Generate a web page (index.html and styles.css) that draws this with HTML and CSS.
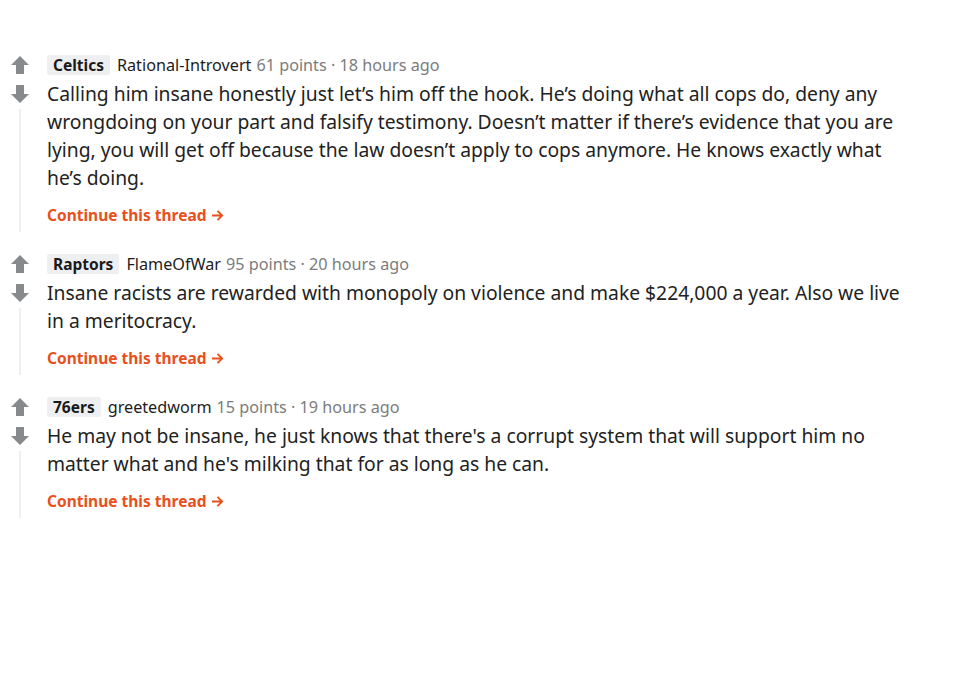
FILE: index.html
```html
<!DOCTYPE html>
<html>
<head>
<meta charset="utf-8">
<link rel="stylesheet" href="styles.css">
</head>
<body>
<div class="thread">
  <div class="comment">
    <div class="rail">
      <svg class="vote" viewBox="0 0 20 20"><path d="M10 1 L19 10 L14 10 L14 19 L6 19 L6 10 L1 10 Z"/></svg>
      <svg class="vote down" viewBox="0 0 20 20"><path d="M10 19 L19 10 L14 10 L14 1 L6 1 L6 10 L1 10 Z"/></svg>
      <div class="line"></div>
    </div>
    <div class="content">
      <div class="meta"><span class="flair">Celtics</span><span class="author">Rational-Introvert</span><span class="info">61 points · 18 hours ago</span></div>
      <p class="body">Calling him insane honestly just let’s him off the hook. He’s doing what all cops do, deny any wrongdoing on your part and falsify testimony. Doesn’t matter if there’s evidence that you are lying, you will get off because the law doesn’t apply to cops anymore. He knows exactly what he’s doing.</p>
      <a class="more" href="#">Continue this thread<svg class="arrow" viewBox="0 0 14 14"><path d="M1 7 H12 M7 2 L12 7 L7 12"/></svg></a>
    </div>
  </div>
  <div class="comment">
    <div class="rail">
      <svg class="vote" viewBox="0 0 20 20"><path d="M10 1 L19 10 L14 10 L14 19 L6 19 L6 10 L1 10 Z"/></svg>
      <svg class="vote down" viewBox="0 0 20 20"><path d="M10 19 L19 10 L14 10 L14 1 L6 1 L6 10 L1 10 Z"/></svg>
      <div class="line"></div>
    </div>
    <div class="content">
      <div class="meta"><span class="flair">Raptors</span><span class="author">FlameOfWar</span><span class="info">95 points · 20 hours ago</span></div>
      <p class="body">Insane racists are rewarded with monopoly on violence and make $224,000 a year. Also we live in a meritocracy.</p>
      <a class="more" href="#">Continue this thread<svg class="arrow" viewBox="0 0 14 14"><path d="M1 7 H12 M7 2 L12 7 L7 12"/></svg></a>
    </div>
  </div>
  <div class="comment">
    <div class="rail">
      <svg class="vote" viewBox="0 0 20 20"><path d="M10 1 L19 10 L14 10 L14 19 L6 19 L6 10 L1 10 Z"/></svg>
      <svg class="vote down" viewBox="0 0 20 20"><path d="M10 19 L19 10 L14 10 L14 1 L6 1 L6 10 L1 10 Z"/></svg>
      <div class="line"></div>
    </div>
    <div class="content">
      <div class="meta"><span class="flair">76ers</span><span class="author">greetedworm</span><span class="info">15 points · 19 hours ago</span></div>
      <p class="body">He may not be insane, he just knows that there's a corrupt system that will support him no matter what and he's milking that for as long as he can.</p>
      <a class="more" href="#">Continue this thread<svg class="arrow" viewBox="0 0 14 14"><path d="M1 7 H12 M7 2 L12 7 L7 12"/></svg></a>
    </div>
  </div>
</div>
</body>
</html>
```

FILE: styles.css
```css
html, body {
  margin: 0;
  padding: 0;
  background: #ffffff;
}
body {
  font-family: "Noto Sans", "Open Sans", sans-serif;
  color: #1c1c1c;
}
.thread {
  padding: 55px 0 0 4px;
  display: flex;
  flex-direction: column;
  gap: 22px;
}
.comment {
  display: flex;
  gap: 11px;
}
.rail {
  width: 32px;
  display: flex;
  flex-direction: column;
  align-items: center;
}
.vote {
  width: 20px;
  height: 20px;
  fill: #878a8c;
  display: block;
}
.vote.down {
  margin-top: 9px;
}
.line {
  flex: 1;
  width: 2px;
  background: #edeff1;
  margin-top: 5px;
  margin-left: -1px;
}
.content {
  width: 858px;
  display: flex;
  flex-direction: column;
  align-items: flex-start;
  padding-bottom: 7px;
}
.meta {
  height: 20px;
  display: flex;
  align-items: center;
  font-size: 16.2px;
  line-height: 20px;
}
.flair {
  background: #edeff1;
  color: #1a1a1b;
  font-weight: 700;
  font-size: 15.5px;
  padding: 0 6px;
  border-radius: 2px;
  margin-right: 7px;
}
.author {
  color: #1c1c1c;
  margin-right: 5px;
}
.info {
  color: #7c7c7c;
}
.body {
  margin: 5px 0 0 0;
  font-size: 19.3px;
  line-height: 28px;
  color: #222222;
}
.more {
  margin-top: 13px;
  font-size: 15.5px;
  line-height: 20px;
  font-weight: 700;
  color: #e8501c;
  text-decoration: none;
  display: flex;
  align-items: center;
}
.arrow {
  width: 13px;
  height: 13px;
  margin-left: 4px;
  fill: none;
  stroke: #e8501c;
  stroke-width: 2;
}
```
